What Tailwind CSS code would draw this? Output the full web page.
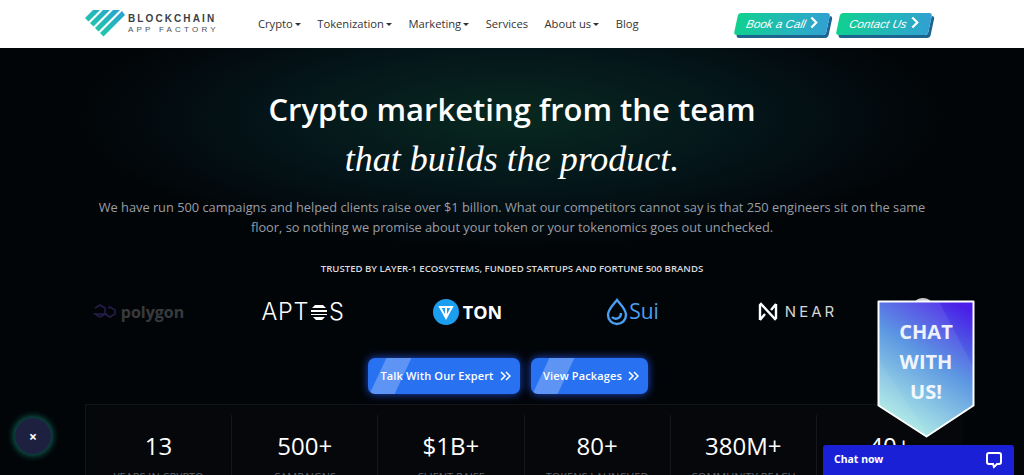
<!DOCTYPE html>
<html lang="en">
  <head>
    <meta charset="UTF-8" />
    <title>Crypto marketing</title>
    <script src="https://cdn.jsdelivr.net/npm/@tailwindcss/browser@4"></script>
  </head>
  <body class="relative h-[475px] w-[1024px] overflow-hidden bg-black font-['Open_Sans',sans-serif]">
    <!-- nav -->
    <header class="flex h-[48px] items-center bg-white pl-[85px] pr-[92px]">
      <div class="flex w-[173px] items-center gap-[3px]">
        <svg class="mt-[-2px]" width="40" height="27" viewBox="0 0 40 27">
          <defs>
            <linearGradient id="lg" x1="0" y1="1" x2="1" y2="0">
              <stop offset="0" stop-color="#1fd39a" />
              <stop offset="1" stop-color="#2a9fd8" />
            </linearGradient>
          </defs>
          <path fill="url(#lg)" d="M0 8 8 0h7L3.500 11.500zM5 13 18 0h7L8.500 16.500zM10 18 28 0h7L13.500 21.500zM15 23 37 1l3 4-21.500 21.500z" />
        </svg>
        <div class="font-['Liberation_Sans',sans-serif] leading-none">
          <div class="text-[10px] font-bold tracking-[2.1px] text-[#3a3f47]">BLOCKCHAIN</div>
          <div class="mt-[2px] text-[8px] tracking-[3.2px] text-[#4a4f57]">APP FACTORY</div>
        </div>
      </div>
      <nav class="flex flex-1 items-center gap-[16.5px] text-[11.2px] text-[#333]">
        <a class="flex items-center gap-[2px]">Crypto<span class="mt-[1px] h-0 w-0 border-x-[3px] border-t-[3px] border-x-transparent border-t-[#333]"></span></a>
        <a class="flex items-center gap-[2px]">Tokenization<span class="mt-[1px] h-0 w-0 border-x-[3px] border-t-[3px] border-x-transparent border-t-[#333]"></span></a>
        <a class="flex items-center gap-[2px]">Marketing<span class="mt-[1px] h-0 w-0 border-x-[3px] border-t-[3px] border-x-transparent border-t-[#333]"></span></a>
        <a>Services</a>
        <a class="flex items-center gap-[2px]">About us<span class="mt-[1px] h-0 w-0 border-x-[3px] border-t-[3px] border-x-transparent border-t-[#333]"></span></a>
        <a>Blog</a>
      </nav>
      <div class="mr-[2px] flex gap-[10px] font-['Liberation_Sans',sans-serif] text-[11.6px] italic text-white">
        <a class="flex h-[22px] w-[92px] -skew-x-[12deg] items-center justify-center gap-[3px] rounded-[3px] bg-gradient-to-r from-[#10d08f] to-[#31a0d2] shadow-[3px_3px_0_#1c6590]">Book a Call<svg class="mt-[-4px] skew-x-[12deg]" width="9" height="13" viewBox="0 0 9 13" fill="none" stroke="#fff" stroke-width="2.200"><path d="m2 1.500 5 5-5 5" /></svg></a>
        <a class="flex h-[22px] w-[92px] -skew-x-[12deg] items-center justify-center gap-[3px] rounded-[3px] bg-gradient-to-r from-[#10d08f] to-[#31a0d2] shadow-[3px_3px_0_#1c6590]">Contact Us<svg class="mt-[-4px] skew-x-[12deg]" width="9" height="13" viewBox="0 0 9 13" fill="none" stroke="#fff" stroke-width="2.200"><path d="m2 1.500 5 5-5 5" /></svg></a>
      </div>
    </header>

    <!-- hero -->
    <main class="h-[427px] bg-[radial-gradient(ellipse_430px_130px_at_512px_70px,#08291f_0%,#04151a_55%,#020508_100%)] pt-[40px] text-center">
      <h1 class="text-[31px] leading-[42px] font-semibold text-white">Crypto marketing from the team</h1>
      <p class="mt-[7px] font-['Liberation_Serif',serif] text-[36px] leading-[44px] text-white italic">that builds the product.</p>
      <p class="mx-auto mt-[16px] w-[840px] text-[12.8px] leading-[20px] text-[#9a9ea4]">We have run 500 campaigns and helped clients raise over $1 billion. What our competitors cannot say is that 250 engineers sit on the same floor, so nothing we promise about your token or your tokenomics goes out unchecked.</p>
      <p class="mt-[25px] text-[9.6px] leading-[14px] font-semibold text-[#d8dade]">TRUSTED BY LAYER-1 ECOSYSTEMS, FUNDED STARTUPS AND FORTUNE 500 BRANDS</p>

      <div class="mt-[13px] flex h-[46px] items-center pl-[56px]">
        <div class="flex w-[165px] items-center justify-center gap-[2px] opacity-40">
          <svg width="26" height="20" viewBox="0 0 26 20" fill="none" stroke="#5a3fa8" stroke-width="1.600"><path d="M2 6 7 3l5 3v6l5 3 5-3V8l-5-3-2 1M12 12l-5 3-5-3z" /></svg>
          <span class="text-[16px] font-bold text-[#8a8a8a]">polygon</span>
        </div>
        <div class="flex w-[164px] items-center justify-center font-['Inter',sans-serif] text-[23.5px] font-light tracking-[0.6px] text-white">APT<svg class="mx-[1px]" width="18" height="18" viewBox="0 0 18 18" fill="#fff"><path d="M5 2h8l3 3H2zM1 7h16v2H1zM1 11h16v1H1zM3 14h12l-3 3H6z" /></svg>S</div>
        <div class="flex w-[165px] items-center justify-center gap-[4px] text-[18px] font-bold text-white">
          <svg width="26" height="26" viewBox="0 0 26 26"><circle cx="13" cy="13" r="13" fill="#1b9df0" /><path d="M7 8h12l-6 11zM13 8v11" fill="none" stroke="#fff" stroke-width="2" /></svg>TON
        </div>
        <div class="flex w-[165px] items-center justify-center gap-[1px] text-[21px] text-[#4a9ff0]">
          <svg width="22" height="28" viewBox="0 0 22 28" fill="none" stroke="#4a9ff0" stroke-width="2.400"><path d="M11 2c3 4 9 9 9 15a9 9 0 0 1-18 0c0-6 6-11 9-15z" /><path d="M6 19c3 3 9 2 9-4" /></svg>Sui
        </div>
        <div class="flex w-[165px] items-center justify-center gap-[7px] font-['Inter',sans-serif] text-[15px] tracking-[3px] text-[#d5d5d5]">
          <svg width="20" height="20" viewBox="0 0 20 20" fill="none" stroke="#fff" stroke-width="2.400"><path d="M2 18V3l1-1 14 15 1-1V2M2 18l5-6M18 2l-5 6" /></svg>NEAR
        </div>
      </div>

      <div class="mt-[23px] flex justify-center gap-[11px] pr-[8px] text-[11px] font-semibold tracking-[0.15px] text-white">
        <a class="relative flex h-[36px] w-[152px] items-center justify-center gap-[6px] overflow-hidden rounded-[7px] bg-[#2872f2] pl-[3px] shadow-[0_0_8px_#1d4ed8]">
          <span class="absolute top-0 left-[10px] h-full w-[25px] -skew-x-[25deg] bg-white/25"></span>Talk With Our Expert
          <svg width="11" height="10" viewBox="0 0 11 10" fill="none" stroke="#fff" stroke-width="1.500"><path d="m1 1 4 4-4 4M6 1l4 4-4 4" /></svg>
        </a>
        <a class="relative flex h-[36px] w-[117px] items-center justify-center gap-[6px] overflow-hidden rounded-[7px] bg-[#2872f2] pl-[3px] shadow-[0_0_8px_#1d4ed8]">
          <span class="absolute top-0 left-[10px] h-full w-[25px] -skew-x-[25deg] bg-white/25"></span>View Packages
          <svg width="11" height="10" viewBox="0 0 11 10" fill="none" stroke="#fff" stroke-width="1.500"><path d="m1 1 4 4-4 4M6 1l4 4-4 4" /></svg>
        </a>
      </div>

      <section class="mt-[10px] ml-[85px] grid h-[80px] w-[878px] grid-cols-6 border-t border-l border-[#111418] bg-[#05070a] pt-[10px]">
        <div class="border-r border-[#14171c] pt-[14px]"><div class="text-[24px] leading-[34px] font-medium text-white">13</div><div class="mt-[6px] text-[11px] text-[#5f646c]">YEARS IN CRYPTO</div></div>
        <div class="border-r border-[#14171c] pt-[14px]"><div class="text-[24px] leading-[34px] font-medium text-white">500+</div><div class="mt-[6px] text-[11px] text-[#5f646c]">CAMPAIGNS</div></div>
        <div class="border-r border-[#14171c] pt-[14px]"><div class="text-[24px] leading-[34px] font-medium text-white">$1B+</div><div class="mt-[6px] text-[11px] text-[#5f646c]">CLIENT RAISE</div></div>
        <div class="border-r border-[#14171c] pt-[14px]"><div class="text-[24px] leading-[34px] font-medium text-white">80+</div><div class="mt-[6px] text-[11px] text-[#5f646c]">TOKENS LAUNCHED</div></div>
        <div class="border-r border-[#14171c] pt-[14px]"><div class="text-[24px] leading-[34px] font-medium text-white">380M+</div><div class="mt-[6px] text-[11px] text-[#5f646c]">COMMUNITY REACH</div></div>
        <div class="pt-[14px]"><div class="text-[24px] leading-[34px] font-medium text-white">40+</div><div class="mt-[6px] text-[11px] text-[#5f646c]">EXCHANGES</div></div>
      </section>
    </main>

    <!-- floating widgets -->
    <button class="absolute top-[418px] left-[15px] flex h-[36px] w-[36px] items-center justify-center rounded-full bg-[#1e2040] text-[14px] font-bold text-white shadow-[0_0_6px_2px_#0f5f55]">×</button>

    <div class="absolute top-[298px] left-[912px] h-[22px] w-[22px] rounded-full bg-[#c9c9c9]"></div>
    <div class="absolute top-[300px] left-[877px] h-[138px] w-[98px]">
      <svg class="absolute inset-0" width="98" height="138" viewBox="0 0 98 138">
        <defs>
          <linearGradient id="cg" x1="0.8" y1="0" x2="0.35" y2="1">
            <stop offset="0" stop-color="#4a1ee8" />
            <stop offset="0.45" stop-color="#4f8fe0" />
            <stop offset="1" stop-color="#aef0e4" />
          </linearGradient>
        </defs>
        <path d="M1.500 1.500h95v104l-47 31-48-31z" fill="url(#cg)" stroke="#fff" stroke-width="2" stroke-linejoin="round" />
        <path d="M2.500 2.500h60l34 65v37l-47 30-48-30z" fill="#fff" fill-opacity="0.08" />
        <path d="M2.500 60 50 135 2.500 104z" fill="#fff" fill-opacity="0.06" />
      </svg>
      <div class="relative pt-[17px] text-center text-[20px] leading-[30px] font-bold text-white/90">CHAT<br />WITH<br />US!</div>
    </div>

    <div class="absolute right-[10px] bottom-0 flex h-[30px] w-[191px] items-center justify-between rounded-t-[3px] bg-[#1a20d6] pr-[11px] pl-[11px] font-['Noto_Sans',sans-serif] text-[10.5px] font-bold text-white">
      Chat now
      <svg width="18" height="18" viewBox="0 0 18 18" fill="none" stroke="#fff" stroke-width="2"><path d="M4 2h10a2 2 0 0 1 2 2v7a2 2 0 0 1-2 2h-2l-3 3-1-3H4a2 2 0 0 1-2-2V4a2 2 0 0 1 2-2z" /></svg>
    </div>
  </body>
</html>
